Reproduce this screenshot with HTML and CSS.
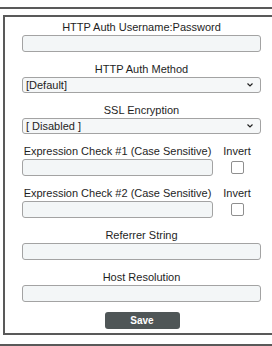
FILE: index.html
```html
<!DOCTYPE html>
<html>
<head>
<meta charset="utf-8">
<link rel="stylesheet" href="styles.css">
</head>
<body>
<div class="rule rule-top"></div>
<div class="panel">
  <form class="form">
    <div class="field">
      <label class="label">HTTP Auth Username:Password</label>
      <input class="text" type="text">
    </div>
    <div class="field">
      <label class="label">HTTP Auth Method</label>
      <div class="select-wrap">
        <select class="select"><option>[Default]</option></select>
        <svg class="chev" width="6" height="4" viewBox="0 0 6 4"><path d="M0.5 0.5 L3 3 L5.5 0.5" fill="none" stroke="#222" stroke-width="1.2"/></svg>
      </div>
    </div>
    <div class="field">
      <label class="label">SSL Encryption</label>
      <div class="select-wrap">
        <select class="select"><option>[ Disabled ]</option></select>
        <svg class="chev" width="6" height="4" viewBox="0 0 6 4"><path d="M0.5 0.5 L3 3 L5.5 0.5" fill="none" stroke="#222" stroke-width="1.2"/></svg>
      </div>
    </div>
    <div class="field expr">
      <label class="label">Expression Check #1 (Case Sensitive)</label>
      <label class="label">Invert</label>
      <input class="text" type="text">
      <input class="check" type="checkbox">
    </div>
    <div class="field expr">
      <label class="label">Expression Check #2 (Case Sensitive)</label>
      <label class="label">Invert</label>
      <input class="text" type="text">
      <input class="check" type="checkbox">
    </div>
    <div class="field">
      <label class="label">Referrer String</label>
      <input class="text" type="text">
    </div>
    <div class="field">
      <label class="label">Host Resolution</label>
      <input class="text" type="text">
    </div>
    <div class="actions">
      <button class="save" type="button">Save</button>
    </div>
  </form>
</div>
<div class="rule rule-bottom"></div>
</body>
</html>
```

FILE: styles.css
```css
html, body {
  margin: 0;
  padding: 0;
  background: #ffffff;
}
body {
  width: 272px;
  font-family: "Liberation Sans", Arial, sans-serif;
  font-size: 11px;
  color: #1e1e1e;
}
.rule {
  height: 0;
  border-top: 2px solid #595959;
  width: 272px;
}
.rule-top {
  margin-top: 7px;
}
.rule-bottom {
  margin-top: 9px;
}
.panel {
  margin: 6px 0 0 3px;
  border: 2px solid #595959;
  border-right: 0;
  width: 269px;
  box-sizing: border-box;
  padding: 4px 0 4px 17px;
}
.form {
  width: 239px;
  display: flex;
  flex-direction: column;
  gap: 11px;
}
.field {
  display: flex;
  flex-direction: column;
  align-items: center;
}
.label {
  display: block;
  line-height: 13px;
  height: 13px;
  margin-bottom: 1px;
  text-align: center;
  white-space: nowrap;
}
.text {
  display: block;
  box-sizing: border-box;
  width: 100%;
  height: 17px;
  margin: 0;
  border: 1px solid #a3a3a3;
  border-radius: 3px;
  background: #f3f6f7;
  padding: 0 3px;
  font: inherit;
}
.select-wrap {
  position: relative;
  width: 100%;
}
.select {
  display: block;
  appearance: none;
  -webkit-appearance: none;
  box-sizing: border-box;
  width: 100%;
  height: 16px;
  margin: 0;
  border: 1px solid #a3a3a3;
  border-radius: 3px;
  background: #f5f7f8;
  padding: 0 0 0 3px;
  font: inherit;
  color: #1e1e1e;
  line-height: 14px;
}
.chev {
  position: absolute;
  right: 8px;
  top: 6px;
}
.expr {
  display: grid;
  grid-template-columns: 191px 48px;
  align-items: center;
  justify-items: center;
}
.check {
  appearance: none;
  -webkit-appearance: none;
  width: 13px;
  height: 13px;
  margin: 0;
  box-sizing: border-box;
  border: 1px solid #8f8f8f;
  border-radius: 2px;
  background: #ffffff;
}
.actions {
  display: flex;
  justify-content: center;
  margin-top: -1px;
}
.save {
  width: 75px;
  height: 17px;
  margin: 0 0 0 1px;
  border: 0;
  border-radius: 3px;
  background: #4f5657;
  color: #ffffff;
  font-family: "Liberation Sans", Arial, sans-serif;
  font-size: 10px;
  font-weight: bold;
  padding: 0;
}
```
